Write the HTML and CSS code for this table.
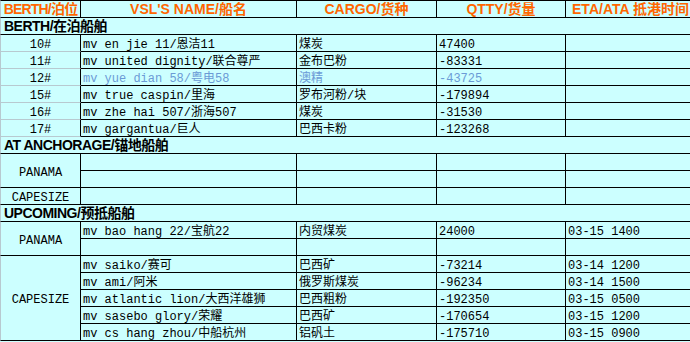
FILE: index.html
```html
<!DOCTYPE html>
<html lang="zh-CN">
<head>
<meta charset="utf-8">
<title>Vessel line-up</title>
<link rel="stylesheet" href="styles.css">
</head>
<body>
<table class="sheet">
  <thead>
    <tr>
      <th class="w1 first">BERTH/泊位</th>
      <th class="w2">VSL'S NAME/船名</th>
      <th class="w3">CARGO/货种</th>
      <th class="w4">QTTY/货量</th>
      <th class="w5">ETA/ATA 抵港时间</th>
    </tr>
  </thead>
  <tbody>
    <tr><td class="section" colspan="5">BERTH/在泊船舶</td></tr>
    <tr><td class="no grid">10#</td><td>mv en jie 11/恩洁11</td><td>煤炭</td><td>47400</td><td></td></tr>
    <tr><td class="no grid">11#</td><td>mv united dignity/联合尊严</td><td>金布巴粉</td><td>-83331</td><td></td></tr>
    <tr class="blue"><td class="no grid">12#</td><td>mv yue dian 58/粤电58</td><td>澳精</td><td>-43725</td><td></td></tr>
    <tr><td class="no grid">15#</td><td>mv true caspin/里海</td><td>罗布河粉/块</td><td>-179894</td><td></td></tr>
    <tr><td class="no grid">16#</td><td>mv zhe hai 507/浙海507</td><td>煤炭</td><td>-31530</td><td></td></tr>
    <tr><td class="no grid">17#</td><td>mv gargantua/巨人</td><td>巴西卡粉</td><td>-123268</td><td></td></tr>

    <tr><td class="section" colspan="5">AT ANCHORAGE/锚地船舶</td></tr>
    <tr><td class="no span" rowspan="2">PANAMA</td><td></td><td></td><td></td><td></td></tr>
    <tr><td></td><td></td><td></td><td></td></tr>
    <tr><td class="no">CAPESIZE</td><td></td><td></td><td></td><td></td></tr>

    <tr><td class="section" colspan="5">UPCOMING/预抵船舶</td></tr>
    <tr><td class="no span" rowspan="2">PANAMA</td><td>mv bao hang 22/宝航22</td><td>内贸煤炭</td><td>24000</td><td>03-15 1400</td></tr>
    <tr><td></td><td></td><td></td><td></td></tr>
    <tr><td class="no span" rowspan="5">CAPESIZE</td><td>mv saiko/赛可</td><td>巴西矿</td><td>-73214</td><td>03-14 1200</td></tr>
    <tr><td>mv ami/阿米</td><td>俄罗斯煤炭</td><td>-96234</td><td>03-14 1500</td></tr>
    <tr><td>mv atlantic lion/大西洋雄狮</td><td>巴西粗粉</td><td>-192350</td><td>03-15 0500</td></tr>
    <tr><td>mv sasebo glory/荣耀</td><td>巴西矿</td><td>-170654</td><td>03-15 1200</td></tr>
    <tr><td>mv cs hang zhou/中船杭州</td><td>铝矾土</td><td>-175710</td><td>03-15 0900</td></tr>
  </tbody>
</table>
</body>
</html>
```
FILE: styles.css
```css
html, body {
  margin: 0;
  padding: 0;
  background: #ccffff;
  overflow: hidden;
}

.sheet {
  border-collapse: separate;
  border-spacing: 0;
  table-layout: fixed;
  width: 696px;
  background: #ccffff;
}

.sheet th,
.sheet td {
  box-sizing: border-box;
  padding: 0;
  border: 0 solid #000;
  border-right-width: 1px;
  border-bottom-width: 1px;
  white-space: nowrap;
}

.sheet th {
  height: 18px;
  border-top-width: 1px;
  padding-top: 1px;
  font: bold 14px/15px "Liberation Sans", "Noto Sans CJK SC", sans-serif;
  color: #ff6600;
  text-align: center;
  vertical-align: top;
}

.sheet th.first {
  letter-spacing: -0.8px;
  border-left: 1px solid #b8c9d0;
}

.w1 { width: 81px; }
.w2 { width: 216px; }
.w3 { width: 140px; }
.w4 { width: 129px; }
.w5 { width: 130px; }

.sheet td {
  height: 17px;
  padding: 4px 0 0 2px;
  font: 12px/12px "Liberation Mono", "Noto Sans CJK SC", monospace;
  color: #000;
  text-align: left;
  vertical-align: top;
}

.sheet td.no {
  padding-left: 0;
  text-align: center;
  border-left: 1px solid #b8c9d0;
}

.sheet td.grid {
  border-bottom-color: #b8c9d0;
}

.sheet td.span {
  vertical-align: middle;
}

.sheet td.section {
  padding: 1px 0 0 3px;
  border-right-width: 0;
  border-left: 1px solid #b8c9d0;
  font: bold 14px/15px "Liberation Sans", "Noto Sans CJK SC", sans-serif;
  letter-spacing: -0.5px;
  color: #000;
}

.blue td {
  color: #6b9bd6;
}

.blue td.no {
  color: #000;
}
```
